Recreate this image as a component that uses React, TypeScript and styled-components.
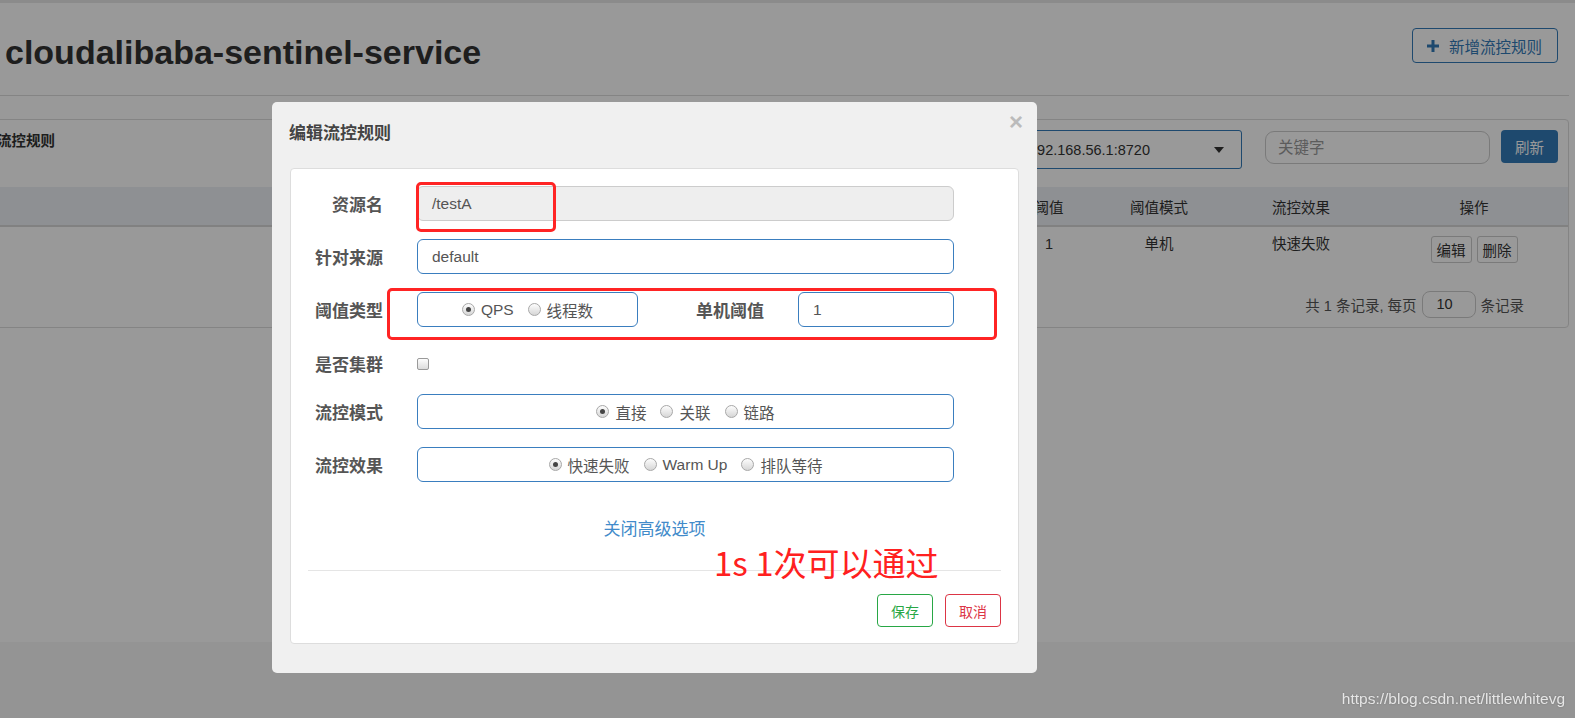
import styled, { createGlobalStyle, css } from 'styled-components';

const FONT = `"Liberation Sans", "Noto Sans CJK SC", sans-serif`;

const GlobalStyle = createGlobalStyle`
  * { box-sizing: border-box; }
  html, body { margin: 0; padding: 0; height: 100%; }
  body {
    background: #f7f7f7;
    font-family: ${FONT};
    color: #333;
    overflow: hidden;
  }
`;

/* ---------- page behind the dialog ---------- */

const Content = styled.div`
  min-height: 642px;
  background: #fff;
  border-top: 3px solid #e8e8e8;
  padding-right: 6px;
`;

const Header = styled.header`
  display: flex;
  justify-content: space-between;
  align-items: flex-start;
  height: 93px;
  padding: 25px 11px 0 5px;
  border-bottom: 1px solid #ddd;
`;

const Title = styled.h1`
  margin: 7px 0 0;
  font-size: 34px;
  line-height: 34px;
  font-weight: 700;
  color: #333;
`;

const OutlineButton = styled.button`
  display: flex;
  align-items: center;
  gap: 10px;
  height: 35px;
  padding: 0 15px 0 14px;
  border: 1px solid #337ab7;
  border-radius: 4px;
  background: #fff;
  color: #337ab7;
  font-family: ${FONT};
  font-size: 15.5px;
`;

const Panel = styled.section`
  margin: 23px 0 0 -20px;
  border: 1px solid #ddd;
  border-radius: 4px;
  background: #fff;
`;

const PanelHeading = styled.div`
  display: flex;
  justify-content: space-between;
  align-items: flex-start;
  height: 67px;
  padding: 10px 10px 0 16px;
`;

const PanelTitle = styled.span`
  margin-top: 1px;
  font-size: 14.5px;
  line-height: 20px;
  font-weight: 700;
  color: #333;
`;

const Toolbar = styled.div`
  display: flex;
  align-items: flex-start;
`;

const MachineSelect = styled.div`
  display: flex;
  align-items: center;
  justify-content: space-between;
  width: 226px;
  height: 39px;
  margin-right: 23px;
  padding: 0 17px 0 12px;
  border: 1px solid #337ab7;
  border-radius: 3px;
  font-size: 14.5px;
  color: #333;
`;

const Caret = styled.span`
  width: 0;
  height: 0;
  border-top: 6px solid #333;
  border-left: 5.5px solid transparent;
  border-right: 5.5px solid transparent;
`;

const SearchInput = styled.input`
  width: 225px;
  height: 33px;
  margin: 1px 11px 0 0;
  padding: 0 12px;
  border: 1px solid #ccc;
  border-radius: 9px;
  font-family: ${FONT};
  font-size: 15.5px;
  &::placeholder { color: #999; }
`;

const PrimaryButton = styled.button`
  width: 57px;
  height: 33px;
  border: none;
  border-radius: 4px;
  background: #337ab7;
  color: #fff;
  font-family: ${FONT};
  font-size: 14.5px;
`;

/* the columns left of 阈值 sit under the dialog and are left blank */
const GRID = 'minmax(0, 1fr) 94px 126px 158px 188px';

const HeadRow = styled.div`
  display: grid;
  grid-template-columns: ${GRID};
  height: 40px;
  align-items: center;
  background: #edf0f5;
  border-bottom: 2px solid #d8d8d8;
`;

const HeadCell = styled.div`
  text-align: center;
  font-size: 14.5px;
  color: #333;
  white-space: nowrap;
`;

const BodyRow = styled.div`
  display: grid;
  grid-template-columns: ${GRID};
  align-items: start;
  padding: 7px 0 9px;
`;

const Cell = styled.div`
  text-align: center;
  font-size: 14.5px;
  line-height: 20px;
  color: #333;
  white-space: nowrap;
`;

const ActionCell = styled.div`
  display: flex;
  justify-content: center;
  gap: 5px;
  margin-top: 2px;
`;

const SmallButton = styled.button`
  height: 27px;
  padding: 0 5px;
  border: 1px solid #ccc;
  border-radius: 3px;
  background: #fff;
  color: #333;
  font-family: ${FONT};
  font-size: 14.5px;
`;

const Pager = styled.div`
  display: flex;
  justify-content: flex-end;
  align-items: center;
  gap: 5px;
  padding: 19px 44px 9px 0;
  font-size: 14.5px;
  color: #555;
`;

const PageSize = styled.div`
  width: 54px;
  height: 27px;
  padding-left: 14px;
  line-height: 25px;
  border: 1px solid #ccc;
  border-radius: 8px;
  color: #333;
`;

/* ---------- overlay + dialog ---------- */

const Overlay = styled.div`
  position: fixed;
  inset: 0;
  background: rgba(0, 0, 0, 0.4);
  z-index: 10;
`;

const Dialog = styled.div`
  position: fixed;
  left: 272px;
  top: 102px;
  width: 765px;
  padding: 0 18px 29px;
  background: #f0f0f0;
  border-radius: 5px;
  z-index: 20;
`;

const DialogHeader = styled.div`
  display: flex;
  align-items: center;
  height: 66px;
  padding-bottom: 8px;
`;

const DialogTitle = styled.h3`
  margin: 0 0 0 -1px;
  font-size: 17px;
  font-weight: 700;
  color: #444;
`;

const CloseButton = styled.span`
  position: absolute;
  top: 8px;
  right: 14px;
  font-size: 24px;
  line-height: 1;
  font-weight: 700;
  color: #bbb;
`;

const Card = styled.div`
  position: relative;
  padding: 17px 0 16px;
  background: #fff;
  border: 1px solid #ddd;
  border-radius: 4px;
`;

const FormRow = styled.div<{ $h?: number; $gap?: number }>`
  position: relative;
  display: flex;
  align-items: center;
  height: ${p => p.$h ?? 35}px;
  margin-bottom: ${p => p.$gap ?? 18}px;
`;

const Label = styled.label<{ $w?: number }>`
  flex-shrink: 0;
  width: ${p => p.$w ?? 92}px;
  margin-right: 34px;
  text-align: right;
  font-size: 17px;
  font-weight: 700;
  color: #555;
`;

const FieldWrap = styled.div`
  position: relative;
`;

const TextInput = styled.div<{ $w?: number; $disabled?: boolean }>`
  display: flex;
  align-items: center;
  width: ${p => p.$w ?? 537}px;
  height: 35px;
  padding: 0 14px;
  border: 1px solid #3a7ebf;
  border-radius: 6px;
  font-size: 15.5px;
  color: #555;
  ${p => p.$disabled && css`
    background: #eee;
    border-color: #ccc;
  `}
`;

const RadioBox = styled.div<{ $w?: number }>`
  display: flex;
  justify-content: center;
  align-items: center;
  gap: 14px;
  width: ${p => p.$w ?? 537}px;
  height: 35px;
  border: 1px solid #3a7ebf;
  border-radius: 6px;
`;

const RadioItem = styled.span`
  display: inline-flex;
  align-items: center;
  gap: 6px;
  font-size: 15.5px;
  color: #555;
`;

const RadioDot = styled.span<{ $checked?: boolean }>`
  position: relative;
  width: 13px;
  height: 13px;
  border-radius: 50%;
  border: 1px solid #a8a8a8;
  background: linear-gradient(#fdfdfd, #d6d6d6);
  ${p => p.$checked && css`
    &::after {
      content: '';
      position: absolute;
      left: 3px;
      top: 3px;
      width: 5px;
      height: 5px;
      border-radius: 50%;
      background: #444;
    }
  `}
`;

const Checkbox = styled.span`
  width: 12px;
  height: 12px;
  margin-top: 1px;
  border: 1px solid #9a9a9a;
  border-radius: 2px;
  background: linear-gradient(#fdfdfd, #dcdcdc);
`;

const ToggleLink = styled.div`
  margin-top: 36px;
  text-align: center;
  font-size: 17px;
  line-height: 24px;
  color: #428bca;
`;

const Divider = styled.hr`
  margin: 28px 17px 0;
  border: none;
  border-top: 1px solid #e5e5e5;
`;

const Footer = styled.div`
  display: flex;
  justify-content: flex-end;
  gap: 12px;
  margin-top: 23px;
  padding-right: 17px;
`;

const FooterButton = styled.button<{ $tone: 'ok' | 'cancel' }>`
  height: 33px;
  padding: 0 13px;
  border-radius: 4px;
  background: #fff;
  font-family: ${FONT};
  font-size: 14px;
  border: 1px solid ${p => (p.$tone === 'ok' ? '#28a745' : '#dc3545')};
  color: ${p => (p.$tone === 'ok' ? '#28a745' : '#dc3545')};
`;

/* ---------- red annotations drawn on the screenshot ---------- */

const Highlight = styled.div<{ $left: number; $top: number; $w: number; $h: number }>`
  position: absolute;
  left: ${p => p.$left}px;
  top: ${p => p.$top}px;
  width: ${p => p.$w}px;
  height: ${p => p.$h}px;
  border: 3px solid #ff2424;
  border-radius: 5px;
  pointer-events: none;
`;

const Note = styled.div`
  position: absolute;
  left: 423px;
  top: 377px;
  font-family: "Noto Sans CJK SC", sans-serif;
  font-size: 33px;
  line-height: 1;
  color: #ff2020;
  white-space: nowrap;
`;

const Watermark = styled.div`
  position: fixed;
  right: 10px;
  bottom: 10px;
  z-index: 30;
  font-size: 15.5px;
  color: #e6e6e6;
  text-shadow: 0 0 2px rgba(0, 0, 0, 0.25);
`;

const PlusIcon = () => (
  <svg width="12" height="12" viewBox="0 0 12 12">
    <path d="M4.5 0h3v4.5H12v3H7.5V12h-3V7.5H0v-3h4.5z" fill="#337ab7" />
  </svg>
);

function Radios({ options, checked, width }: { options: string[]; checked: number; width?: number }) {
  return (
    <RadioBox $w={width}>
      {options.map((o, i) => (
        <RadioItem key={o}>
          <RadioDot $checked={i === checked} />
          {o}
        </RadioItem>
      ))}
    </RadioBox>
  );
}

const columns = ['', '阈值', '阈值模式', '流控效果', '操作'];
const row = ['', '1', '单机', '快速失败'];

export default function App() {
  return (
    <>
      <GlobalStyle />
      <Content>
        <Header>
          <Title>cloudalibaba-sentinel-service</Title>
          <OutlineButton>
            <PlusIcon />
            新增流控规则
          </OutlineButton>
        </Header>

        <Panel>
          <PanelHeading>
            <PanelTitle>流控规则</PanelTitle>
            <Toolbar>
              <MachineSelect>
                192.168.56.1:8720
                <Caret />
              </MachineSelect>
              <SearchInput placeholder="关键字" />
              <PrimaryButton>刷新</PrimaryButton>
            </Toolbar>
          </PanelHeading>

          <HeadRow>
            {columns.map((c, i) => (
              <HeadCell key={i}>{c}</HeadCell>
            ))}
          </HeadRow>
          <BodyRow>
            {row.map((c, i) => (
              <Cell key={i}>{c}</Cell>
            ))}
            <ActionCell>
              <SmallButton>编辑</SmallButton>
              <SmallButton>删除</SmallButton>
            </ActionCell>
          </BodyRow>
          <Pager>
            共 1 条记录, 每页
            <PageSize>10</PageSize>
            条记录
          </Pager>
        </Panel>
      </Content>

      <Overlay />

      <Dialog>
        <DialogHeader>
          <DialogTitle>编辑流控规则</DialogTitle>
          <CloseButton>×</CloseButton>
        </DialogHeader>

        <Card>
          <FormRow>
            <Label>资源名</Label>
            <FieldWrap>
              <TextInput $disabled>/testA</TextInput>
              <Highlight $left={-1} $top={-4} $w={140} $h={50} />
            </FieldWrap>
          </FormRow>

          <FormRow>
            <Label>针对来源</Label>
            <TextInput>default</TextInput>
          </FormRow>

          <FormRow>
            <Label>阈值类型</Label>
            <Radios options={['QPS', '线程数']} checked={0} width={221} />
            <Label $w={126}>单机阈值</Label>
            <TextInput $w={156}>1</TextInput>
            <Highlight $left={96} $top={-4} $w={610} $h={52} />
          </FormRow>

          <FormRow $h={36} $gap={13}>
            <Label>是否集群</Label>
            <Checkbox />
          </FormRow>

          <FormRow>
            <Label>流控模式</Label>
            <Radios options={['直接', '关联', '链路']} checked={0} />
          </FormRow>

          <FormRow $gap={0}>
            <Label>流控效果</Label>
            <Radios options={['快速失败', 'Warm Up', '排队等待']} checked={0} />
          </FormRow>

          <ToggleLink>关闭高级选项</ToggleLink>
          <Divider />
          <Footer>
            <FooterButton $tone="ok">保存</FooterButton>
            <FooterButton $tone="cancel">取消</FooterButton>
          </Footer>

          <Note>1s 1次可以通过</Note>
        </Card>
      </Dialog>

      <Watermark>https://blog.csdn.net/littlewhitevg</Watermark>
    </>
  );
}
